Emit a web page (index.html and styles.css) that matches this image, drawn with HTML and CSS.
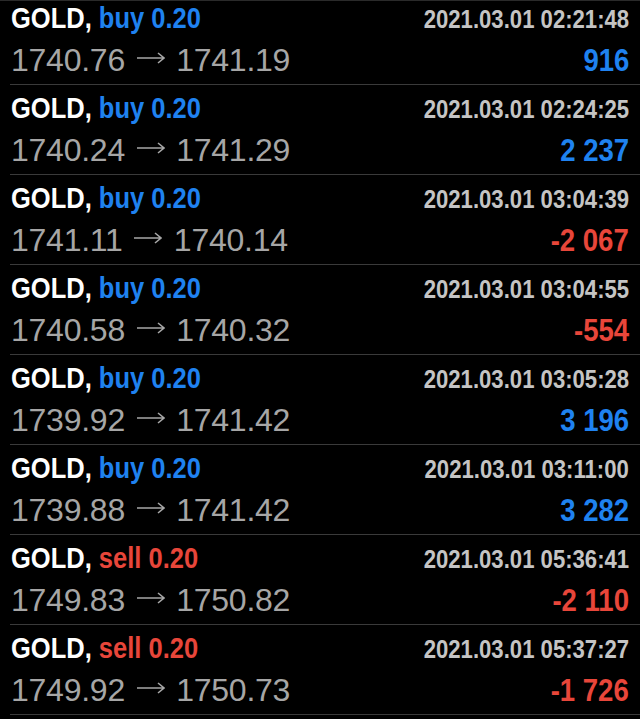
FILE: index.html
```html
<!DOCTYPE html>
<html>
	<head>
		<meta charset="UTF-8">
		<meta name="viewport" content="width=device-width, initial-scale=1.0">
		<title>History</title>
		<link rel="stylesheet" href="styles.css">
	</head>
	<body>
		<div class="deals">
			<div class="deal">
				<div class="line">
					<span class="title">GOLD, <span class="buy">buy 0.20</span></span>
					<span class="date">2021.03.01 02:21:48</span>
				</div>
				<div class="line">
					<span class="prices">1740.76 <svg class="arrow" viewBox="0 0 28 12"><path d="M0 6H27M21 1L27 6L21 11"/></svg> 1741.19</span>
					<span class="profit buy">916</span>
				</div>
			</div>
			<div class="deal">
				<div class="line">
					<span class="title">GOLD, <span class="buy">buy 0.20</span></span>
					<span class="date">2021.03.01 02:24:25</span>
				</div>
				<div class="line">
					<span class="prices">1740.24 <svg class="arrow" viewBox="0 0 28 12"><path d="M0 6H27M21 1L27 6L21 11"/></svg> 1741.29</span>
					<span class="profit buy">2 237</span>
				</div>
			</div>
			<div class="deal">
				<div class="line">
					<span class="title">GOLD, <span class="buy">buy 0.20</span></span>
					<span class="date">2021.03.01 03:04:39</span>
				</div>
				<div class="line">
					<span class="prices">1741.11 <svg class="arrow" viewBox="0 0 28 12"><path d="M0 6H27M21 1L27 6L21 11"/></svg> 1740.14</span>
					<span class="profit sell">-2 067</span>
				</div>
			</div>
			<div class="deal">
				<div class="line">
					<span class="title">GOLD, <span class="buy">buy 0.20</span></span>
					<span class="date">2021.03.01 03:04:55</span>
				</div>
				<div class="line">
					<span class="prices">1740.58 <svg class="arrow" viewBox="0 0 28 12"><path d="M0 6H27M21 1L27 6L21 11"/></svg> 1740.32</span>
					<span class="profit sell">-554</span>
				</div>
			</div>
			<div class="deal">
				<div class="line">
					<span class="title">GOLD, <span class="buy">buy 0.20</span></span>
					<span class="date">2021.03.01 03:05:28</span>
				</div>
				<div class="line">
					<span class="prices">1739.92 <svg class="arrow" viewBox="0 0 28 12"><path d="M0 6H27M21 1L27 6L21 11"/></svg> 1741.42</span>
					<span class="profit buy">3 196</span>
				</div>
			</div>
			<div class="deal">
				<div class="line">
					<span class="title">GOLD, <span class="buy">buy 0.20</span></span>
					<span class="date">2021.03.01 03:11:00</span>
				</div>
				<div class="line">
					<span class="prices">1739.88 <svg class="arrow" viewBox="0 0 28 12"><path d="M0 6H27M21 1L27 6L21 11"/></svg> 1741.42</span>
					<span class="profit buy">3 282</span>
				</div>
			</div>
			<div class="deal">
				<div class="line">
					<span class="title">GOLD, <span class="sell">sell 0.20</span></span>
					<span class="date">2021.03.01 05:36:41</span>
				</div>
				<div class="line">
					<span class="prices">1749.83 <svg class="arrow" viewBox="0 0 28 12"><path d="M0 6H27M21 1L27 6L21 11"/></svg> 1750.82</span>
					<span class="profit sell">-2 110</span>
				</div>
			</div>
			<div class="deal">
				<div class="line">
					<span class="title">GOLD, <span class="sell">sell 0.20</span></span>
					<span class="date">2021.03.01 05:37:27</span>
				</div>
				<div class="line">
					<span class="prices">1749.92 <svg class="arrow" viewBox="0 0 28 12"><path d="M0 6H27M21 1L27 6L21 11"/></svg> 1750.73</span>
					<span class="profit sell">-1 726</span>
				</div>
			</div>
		</div>
	</body>
</html>
```

FILE: styles.css
```css
* {
	box-sizing: border-box;
}

body {
	margin: 0;
	padding: 0;
	background-color: #000;
	font-family: "Liberation Sans", Arial, sans-serif;
	color: #fff;
}

.deals {
	border-top: 1px solid #2a2a2a;
}

.deal {
	height: 90px;
	margin-left: 10px;
	padding: 6px 11px 0 1px;
	border-bottom: 1px solid #3a3a3a;
	display: flex;
	flex-direction: column;
}

/* list is scrolled a little, so the first row is cut at the top */
.deal:first-child {
	height: 84px;
	padding-top: 0;
}

.line {
	display: flex;
	justify-content: space-between;
	align-items: baseline;
	white-space: nowrap;
}

.line:first-child > span {
	line-height: 34px;
}

.line:last-child {
	margin-top: 2px;
}

.line:last-child > span {
	line-height: 44px;
}

/* the app font is a narrow grotesque; squeeze the bold faces to match */
.title {
	display: inline-block;
	font-weight: bold;
	font-size: 30px;
	color: #fff;
	transform: scaleX(0.85);
	transform-origin: left center;
}

.date {
	display: inline-block;
	font-weight: bold;
	font-size: 25px;
	color: #c4c4c4;
	transform: scaleX(0.885);
	transform-origin: right center;
}

.prices {
	font-size: 32px;
	letter-spacing: -0.25px;
	color: #a6a6a6;
}

.arrow {
	width: 28px;
	height: 12px;
	margin: 0 3px;
	vertical-align: 7px;
	fill: none;
	stroke: #a6a6a6;
	stroke-width: 1.6;
}

.profit {
	display: inline-block;
	font-weight: bold;
	font-size: 32px;
	transform: scaleX(0.86);
	transform-origin: right center;
}

.buy {
	color: #1f82f0;
}

.sell {
	color: #e8463a;
}
```
